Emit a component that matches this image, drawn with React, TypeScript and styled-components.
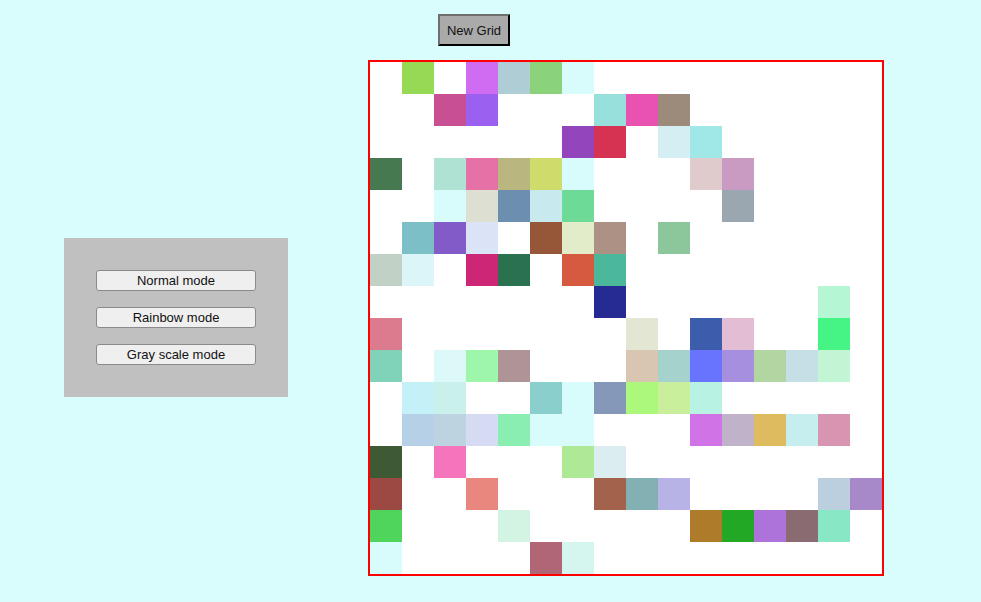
import React from "react"
import styled, { createGlobalStyle } from "styled-components"

const GlobalStyle = createGlobalStyle`
  body {
    margin: 0;
    background: #d9fcfc;
    font-family: "Liberation Sans", Arial, sans-serif;
  }
`

const Page = styled.div`
  display: flex;
  flex-direction: column;
`

const Header = styled.div`
  display: flex;
  padding: 14px 0 14px 438px;
`

const NewGridButton = styled.button`
  width: 72px;
  height: 32px;
  padding: 0;
  background: #aaaaaa;
  border: 2px outset #767676;
  border-color: #6f6f6f #2a2a2a #2a2a2a #6f6f6f;
  font-family: "Liberation Sans", Arial, sans-serif;
  font-size: 13px;
  color: #111;
`

const Main = styled.div`
  display: flex;
  align-items: center;
  gap: 80px;
  padding-left: 64px;
`

const Panel = styled.div`
  display: flex;
  flex-direction: column;
  gap: 16px;
  padding: 32px;
  margin-bottom: 2px;
  background: #c0c0c0;
`

const ModeButton = styled.button`
  width: 160px;
  height: 21px;
  padding: 0;
  background: #efefef;
  border: 1px solid #8a8a8a;
  border-radius: 3px;
  font-family: "Liberation Sans", Arial, sans-serif;
  font-size: 13px;
  color: #111;
`

const Board = styled.div`
  display: grid;
  grid-template-columns: repeat(16, 32px);
  grid-template-rows: repeat(16, 32px);
  border: 2px solid #ff0000;
  background: #ffffff;
`

const Cell = styled.div<{ $color?: string }>`
  background: ${(p) => p.$color || "#ffffff"};
`

const _ = ""
const L = "#d8fcfc"

const cells: string[][] = [
  [_, "#95d955", _, "#cf6cf2", "#afcdd4", "#8bd37a", L, _, _, _, _, _, _, _, _, _],
  [_, _, "#c94f93", "#9c60f0", _, _, _, "#98e0dc", "#ea52b2", "#9c8a7a", _, _, _, _, _, _],
  [_, _, _, _, _, _, "#9345bb", "#d63251", _, "#d4eef3", "#a0e8e8", _, _, _, _, _],
  ["#46794f", _, "#b0e2d4", "#e671a6", "#b9b77f", "#cfdc6c", L, _, _, _, "#dfcbcb", "#c99bc3", _, _, _, _],
  [_, _, L, "#dcdfd1", "#6c8eaf", "#c8eaee", "#6dda98", _, _, _, _, "#9ba7b0", _, _, _, _],
  [_, "#7cbfc6", "#835bc9", "#dbe3f7", _, "#965738", "#e2ecc9", "#ad9184", _, "#8bc79b", _, _, _, _, _, _],
  ["#c1d1c5", "#dcf5f8", _, "#cd2676", "#2a7150", _, "#d65a40", "#4bb79b", _, _, _, _, _, _, _, _],
  [_, _, _, _, _, _, _, "#262a93", _, _, _, _, _, _, "#b5f7d5", _],
  ["#db7b8d", _, _, _, _, _, _, _, "#e3e6d3", _, "#3b5dac", "#e2bdd4", _, _, "#45f485", _],
  ["#80d2b8", _, "#dcf8f8", "#9df6aa", "#ae9397", _, _, _, "#d9c6b2", "#a5d2cc", "#6874fe", "#a58fde", "#b2d6a2", "#c4e0e6", "#c1f5d3", _],
  [_, "#c4f1f8", "#caf0ec", _, _, "#8acfcb", L, "#8598ba", "#abf87c", "#c9ef9c", "#b8f2e2", _, _, _, _, _],
  [_, "#b5d0e7", "#bdd3df", "#d5dbf3", "#8aeeb0", L, L, _, _, _, "#d073e6", "#c0b2c9", "#dfbb5f", "#c6eeee", "#d895b1", _],
  ["#3d5a35", _, "#f575bd", _, _, _, "#aeea96", "#dbedf0", _, _, _, _, _, _, _, _],
  ["#9c4943", _, _, "#e9877e", _, _, _, "#a3624b", "#83b0b3", "#b7b3e6", _, _, _, _, "#bccfde", "#a788c8"],
  ["#4fd55c", _, _, _, "#d3f3e3", _, _, _, _, _, "#ae7b2a", "#22a824", "#ad73da", "#8a6b71", "#88e8c6", _],
  [L, _, _, _, _, "#b06675", "#d5f6ee", _, _, _, _, _, _, _, _, _],
]

const App = () => (
  <Page>
    <GlobalStyle />
    <Header>
      <NewGridButton>New Grid</NewGridButton>
    </Header>
    <Main>
      <Panel>
        <ModeButton>Normal mode</ModeButton>
        <ModeButton>Rainbow mode</ModeButton>
        <ModeButton>Gray scale mode</ModeButton>
      </Panel>
      <Board>
        {cells.flatMap((row, r) =>
          row.map((c, i) => <Cell key={`${r}-${i}`} $color={c || undefined} />)
        )}
      </Board>
    </Main>
  </Page>
)

export default App
